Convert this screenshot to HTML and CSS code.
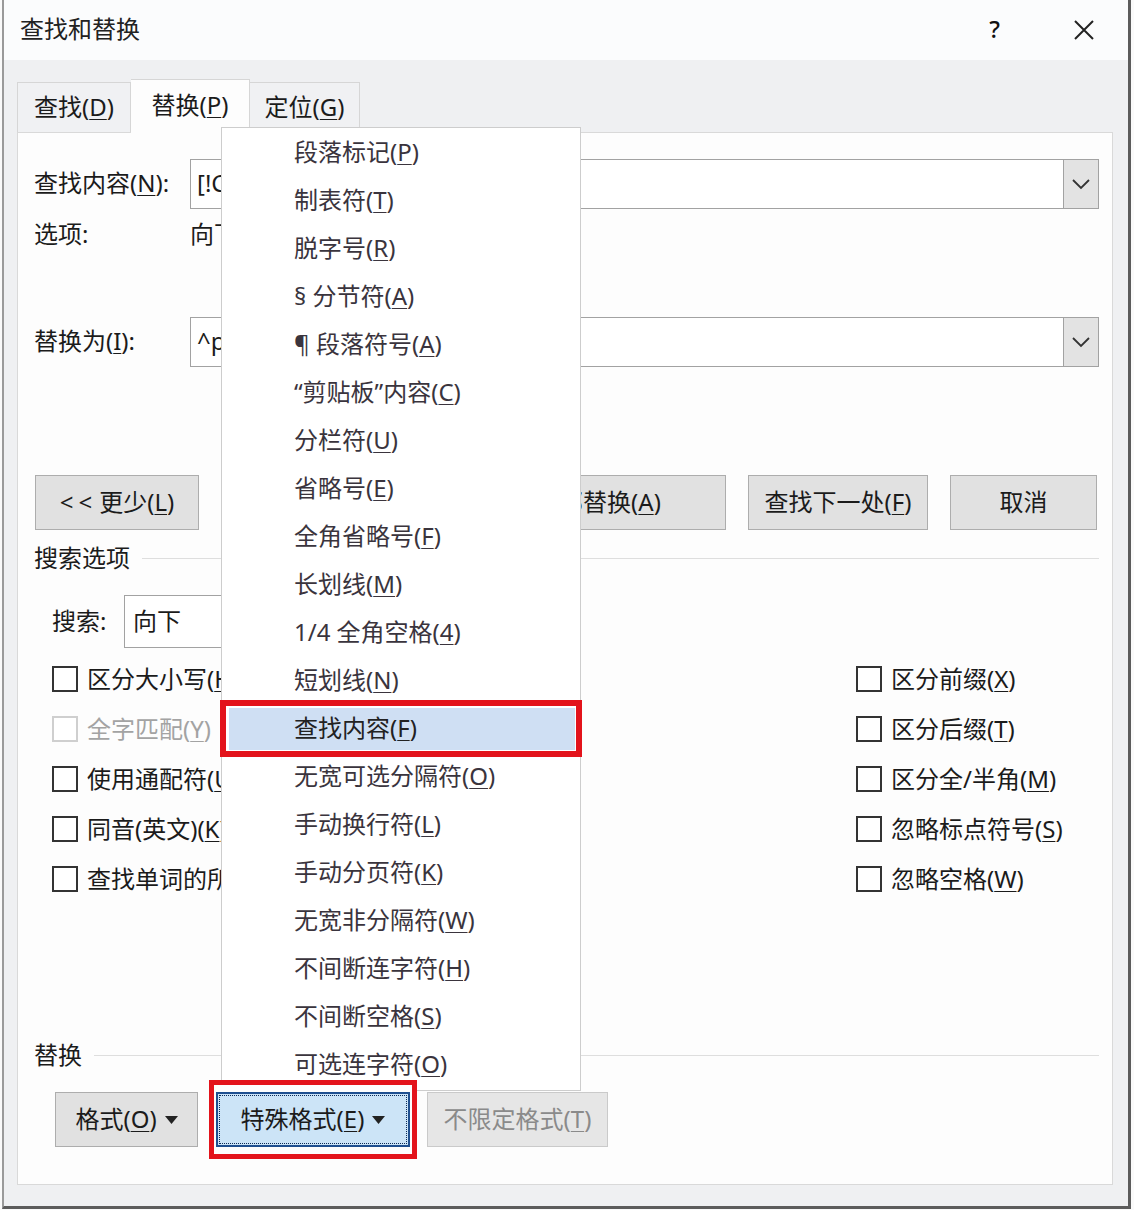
FILE: index.html
```html
<!DOCTYPE html>
<html lang="zh-CN">
<head>
	<meta charset="utf-8" />
	<title>查找和替换</title>
	<link rel="stylesheet" href="styles.css">
</head>
<body>
<div class="dialog">

	<div class="titlebar">
		<span class="title">查找和替换</span>
		<span class="help">?</span>
		<span class="close">
			<svg width="20" height="20" viewBox="0 0 20 20"><path d="M1 1 L19 19 M19 1 L1 19" stroke="#222" stroke-width="2" fill="none"/></svg>
		</span>
	</div>

	<div class="dlg-body">
		<div class="tabs">
			<div class="tab tab1">查找(<u>D</u>)</div>
			<div class="tab tab2 active">替换(<u>P</u>)</div>
			<div class="tab tab3">定位(<u>G</u>)</div>
		</div>

		<div class="panel">
			<div class="field-row first">
				<div class="label">查找内容(<u>N</u>):</div>
				<div class="combo">
					<span class="combo-text">[!C0-9]</span>
					<span class="combo-btn"><svg width="20" height="12" viewBox="0 0 20 12"><polyline points="2,2 10,10 18,2" stroke="#333" stroke-width="1.8" fill="none"/></svg></span>
				</div>
			</div>
			<div class="opt-row">
				<div class="label">选项:</div>
				<div class="opt-value">向下，使用通配符</div>
			</div>
			<div class="field-row second">
				<div class="label">替换为(<u>I</u>):</div>
				<div class="combo">
					<span class="combo-text">^p</span>
					<span class="combo-btn"><svg width="20" height="12" viewBox="0 0 20 12"><polyline points="2,2 10,10 18,2" stroke="#333" stroke-width="1.8" fill="none"/></svg></span>
				</div>
			</div>

			<div class="btn-row">
				<div class="btn btn-less"><span class="arrows">&lt;&lt;</span> 更少(<u>L</u>)</div>
				<div class="btn-group">
					<div class="btn btn-rep">替换(<u>R</u>)</div>
					<div class="btn btn-all">全部替换(<u>A</u>)</div>
					<div class="btn btn-next">查找下一处(<u>F</u>)</div>
					<div class="btn btn-cancel">取消</div>
				</div>
			</div>

			<div class="section search-head">搜索选项</div>

			<div class="search-row">
				<div class="search-label">搜索:</div>
				<div class="select">向下</div>
			</div>

			<div class="checks">
				<div class="cb"><span class="box"></span>区分大小写(<u>H</u>)</div>
				<div class="cb disabled"><span class="box"></span>全字匹配(<u>Y</u>)</div>
				<div class="cb"><span class="box"></span>使用通配符(<u>U</u>)</div>
				<div class="cb"><span class="box"></span>同音(英文)(<u>K</u>)</div>
				<div class="cb"><span class="box"></span>查找单词的所有形式(英文)(<u>W</u>)</div>
				<div class="cb"><span class="box"></span>区分前缀(<u>X</u>)</div>
				<div class="cb"><span class="box"></span>区分后缀(<u>T</u>)</div>
				<div class="cb"><span class="box"></span>区分全/半角(<u>M</u>)</div>
				<div class="cb"><span class="box"></span>忽略标点符号(<u>S</u>)</div>
				<div class="cb"><span class="box"></span>忽略空格(<u>W</u>)</div>
			</div>

			<div class="section replace-head">替换</div>

			<div class="fmt-row">
				<div class="btn btn-fmt">格式(<u>O</u>) <svg class="tri" width="13" height="8" viewBox="0 0 13 8"><path d="M0 0 H13 L6.5 8 Z" fill="#222"/></svg></div>
				<div class="mark">
					<div class="btn btn-special">特殊格式(<u>E</u>) <svg class="tri" width="13" height="8" viewBox="0 0 13 8"><path d="M0 0 H13 L6.5 8 Z" fill="#222"/></svg></div>
				</div>
				<div class="btn btn-nofmt">不限定格式(<u>T</u>)</div>
			</div>
		</div>
	</div>

	<!-- special characters drop-down -->
	<div class="menu">
		<div class="item">段落标记(<u>P</u>)</div>
		<div class="item">制表符(<u>T</u>)</div>
		<div class="item">脱字号(<u>R</u>)</div>
		<div class="item">§ 分节符(<u>A</u>)</div>
		<div class="item">¶ 段落符号(<u>A</u>)</div>
		<div class="item">“剪贴板”内容(<u>C</u>)</div>
		<div class="item">分栏符(<u>U</u>)</div>
		<div class="item">省略号(<u>E</u>)</div>
		<div class="item">全角省略号(<u>F</u>)</div>
		<div class="item">长划线(<u>M</u>)</div>
		<div class="item">1/4 全角空格(<u>4</u>)</div>
		<div class="item">短划线(<u>N</u>)</div>
		<div class="item active">查找内容(<u>F</u>)</div>
		<div class="item">无宽可选分隔符(<u>O</u>)</div>
		<div class="item">手动换行符(<u>L</u>)</div>
		<div class="item">手动分页符(<u>K</u>)</div>
		<div class="item">无宽非分隔符(<u>W</u>)</div>
		<div class="item">不间断连字符(<u>H</u>)</div>
		<div class="item">不间断空格(<u>S</u>)</div>
		<div class="item">可选连字符(<u>O</u>)</div>
	</div>

</div>
</body>
</html>
```

FILE: styles.css
```css
body{
	margin: 0;
	background: #fafafa;
	font-family: "Noto Sans", "Noto Sans CJK SC", sans-serif;
	font-size: 24px;
	line-height: 1.2;
	color: #1b1b1b;
}

u{
	text-underline-offset: 3px;
	text-decoration-thickness: 1px;
}

.dialog{
	position: relative;
	box-sizing: border-box;
	margin-left: 2px;
	width: 1129px;
	height: 1209px;
	border-left: 2px solid #9a9a9a;
	border-right: 3px solid #5c5c5c;
	border-bottom: 3px solid #5c5c5c;
	background: #eff0f2;
}

/* title bar */
.titlebar{
	display: flex;
	align-items: center;
	box-sizing: border-box;
	height: 60px;
	background: #fbfcfd;
	padding: 0 0 1px 16px;
}
.title{
	color: #222;
}
.help{
	margin-left: auto;
	color: #111;
	font-weight: 500;
}
.close{
	display: flex;
	margin-left: 74px;
	margin-right: 34px;
}

.dlg-body{
	padding: 19px 15px 0 13px;
}

/* tabs */
.tabs{
	display: flex;
	align-items: flex-end;
	height: 53px;
}
.tab{
	box-sizing: border-box;
	height: 50px;
	display: flex;
	align-items: center;
	justify-content: center;
	border: 1px solid #d6d6d6;
	border-bottom: none;
	background: #f0f1f3;
}
.tab1{ width: 114px; }
.tab2{ width: 119px; }
.tab3{ width: 110px; border-left: none; }
.tab.active{
	position: relative;
	z-index: 2;
	height: 54px;
	margin-bottom: -1px;
	background: #fdfdfd;
	border-left: none;
	padding-bottom: 2px;
}

.panel{
	box-sizing: border-box;
	height: 1053px;
	background: #fdfdfd;
	border: 1px solid #d9d9d9;
	padding: 0 13px 0 16px;
}

.label{
	width: 156px;
	flex: none;
	padding-bottom: 1px;
}

.field-row{
	display: flex;
	align-items: center;
	height: 50px;
}
.field-row.first{ margin-top: 26px; }
.field-row.second{ margin-top: 56px; }

.combo{
	flex: 1;
	display: flex;
	align-items: stretch;
	height: 50px;
	box-sizing: border-box;
	border: 1px solid #a2a2a2;
	background: #fff;
}
.combo-text{
	flex: 1;
	display: flex;
	align-items: center;
	padding: 0 0 1px 6px;
}
.combo-btn{
	width: 34px;
	display: flex;
	align-items: center;
	justify-content: center;
	background: #e3e3e3;
	border-left: 1px solid #a2a2a2;
}

.opt-row{
	display: flex;
	align-items: center;
	height: 52px;
	padding-bottom: 1px;
	box-sizing: border-box;
}

/* push buttons */
.btn{
	box-sizing: border-box;
	display: flex;
	align-items: center;
	justify-content: center;
	height: 55px;
	padding-bottom: 1px;
	background: #e1e1e1;
	border: 1px solid #adadad;
	color: #1b1b1b;
	white-space: nowrap;
}

.btn-row{
	display: flex;
	margin-top: 108px;
	height: 55px;
}
.btn-less{
	width: 164px;
	margin-left: 1px;
}
.arrows{
	letter-spacing: 5px;
	margin-right: 2px;
}
.btn-group{
	display: flex;
	gap: 22px;
	margin-left: auto;
	margin-right: 2px;
}
.btn-rep{ width: 160px; }
.btn-all{ width: 256px; }
.btn-next{ width: 180px; }
.btn-cancel{ width: 147px; }

/* section headings with rule */
.section{
	display: flex;
	align-items: center;
	height: 28px;
}
.section::after{
	content: "";
	flex: 1;
	height: 1px;
	background: #dedede;
	margin-left: 12px;
}
.search-head{ margin-top: 14px; }
.replace-head{ margin-top: 137px; }

.search-row{
	display: flex;
	align-items: center;
	margin-top: 23px;
	height: 53px;
	padding-left: 18px;
}
.search-label{
	width: 72px;
	padding-bottom: 1px;
}
.select{
	box-sizing: border-box;
	width: 240px;
	height: 53px;
	border: 1px solid #a2a2a2;
	display: flex;
	align-items: center;
	padding: 0 0 1px 8px;
	background: #fff;
}

/* check boxes */
.checks{
	display: grid;
	grid-template-columns: 804px 1fr;
	grid-template-rows: repeat(5, 50px);
	grid-auto-flow: column;
	margin-top: 6px;
	padding-left: 18px;
}
.cb{
	display: flex;
	align-items: center;
	white-space: nowrap;
}
.box{
	box-sizing: border-box;
	width: 26px;
	height: 26px;
	border: 2px solid #333;
	background: #fff;
	margin-right: 9px;
	flex: none;
}
.cb.disabled{
	color: #a3a3a3;
}
.cb.disabled .box{
	border-color: #cfcfcf;
}

/* format buttons */
.fmt-row{
	display: flex;
	align-items: center;
	margin-top: 23px;
	height: 55px;
	padding-left: 21px;
}
.btn-fmt{
	width: 143px;
}
.tri{
	margin-left: 8px;
	margin-top: 2px;
}
.mark{
	position: relative;
	z-index: 6;
	margin: -12px 0 -12px 11px;
	padding: 7px 2px;
	border: 5px solid #e3131b;
	background: #fdfdfd;
}
.btn-special{
	width: 194px;
	background: #cce4f7;
	border: 2px solid #1f4f8f;
	outline: 1px dotted #0c2a55;
	outline-offset: -4px;
}
.btn-nofmt{
	width: 181px;
	margin-left: 10px;
	background: #e6e6e6;
	border-color: #cacaca;
	color: #8a8a8a;
}

/* drop-down menu */
.menu{
	position: absolute;
	left: 217px;
	top: 127px;
	width: 360px;
	box-sizing: border-box;
	padding: 1px 0;
	border: 1px solid #cdcdcd;
	background: #fff;
	z-index: 5;
}
.item{
	box-sizing: border-box;
	height: 48px;
	display: flex;
	align-items: center;
	padding: 0 0 1px 72px;
	color: #3a343d;
	white-space: nowrap;
}
.item.active{
	position: relative;
	border-style: solid;
	border-color: #fff;
	border-width: 3px 5px 3px 7px;
	padding-left: 65px;
	background: #cfdff3;
	color: #222;
}
.item.active::before{
	content: "";
	position: absolute;
	left: -9px;
	right: -7px;
	top: -8px;
	bottom: -7px;
	border: 6px solid #e3131b;
}
```
